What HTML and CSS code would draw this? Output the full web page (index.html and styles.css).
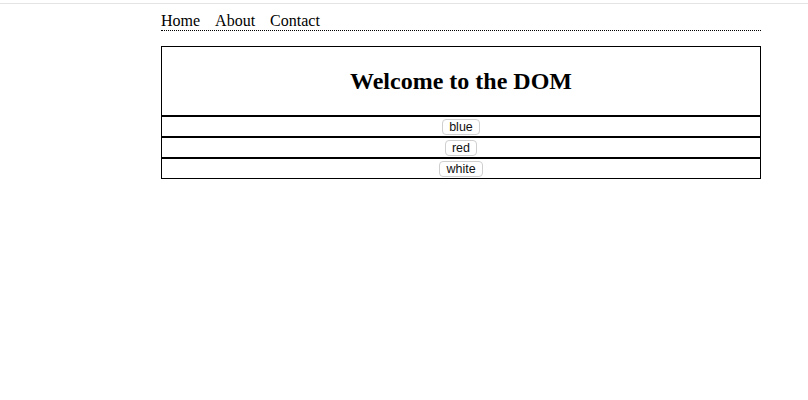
FILE: index.html
```html
<!DOCTYPE html>
<html lang="en">
<head>
<meta charset="utf-8">
<title>Welcome to the DOM</title>
<link rel="stylesheet" href="styles.css">
</head>
<body>
<div class="topbar"></div>
<div class="page">
  <nav class="nav">
    <a href="#">Home</a>
    <a href="#">About</a>
    <a href="#">Contact</a>
  </nav>
  <main class="panel">
    <header class="panel-head">
      <h1>Welcome to the DOM</h1>
    </header>
    <div class="row"><button class="btn">blue</button></div>
    <div class="row"><button class="btn">red</button></div>
    <div class="row"><button class="btn">white</button></div>
  </main>
</div>
</body>
</html>
```
FILE: styles.css
```css
html, body {
  margin: 0;
  padding: 0;
  background: #ffffff;
  color: #000;
  font-family: "Liberation Serif", "Times New Roman", serif;
}

.topbar {
  height: 3px;
  border-bottom: 1px solid #e4e4e4;
}

.page {
  width: 600px;
  margin-left: 161px;
  padding-top: 7px;
}

.nav {
  display: flex;
  gap: 15px;
  font-size: 16px;
  line-height: 19px;
  border-bottom: 1px dotted #000;
}

.nav a {
  color: #000;
  text-decoration: none;
}

.panel {
  margin-top: 15px;
  display: flex;
  flex-direction: column;
}

.panel-head {
  border: 1px solid #000;
}

.panel-head h1 {
  margin: 20px 0;
  font-size: 24px;
  line-height: 28px;
  font-weight: bold;
  text-align: center;
}

.row {
  border: 1px solid #000;
  height: 19px;
  display: flex;
  align-items: center;
  justify-content: center;
}

.btn {
  font-family: "Liberation Sans", Arial, sans-serif;
  font-size: 12.5px;
  line-height: 14px;
  height: 16px;
  padding: 0 6px;
  background: #fff;
  color: #111;
  border: 1px solid #cfcfcf;
  border-radius: 4px;
}
```
